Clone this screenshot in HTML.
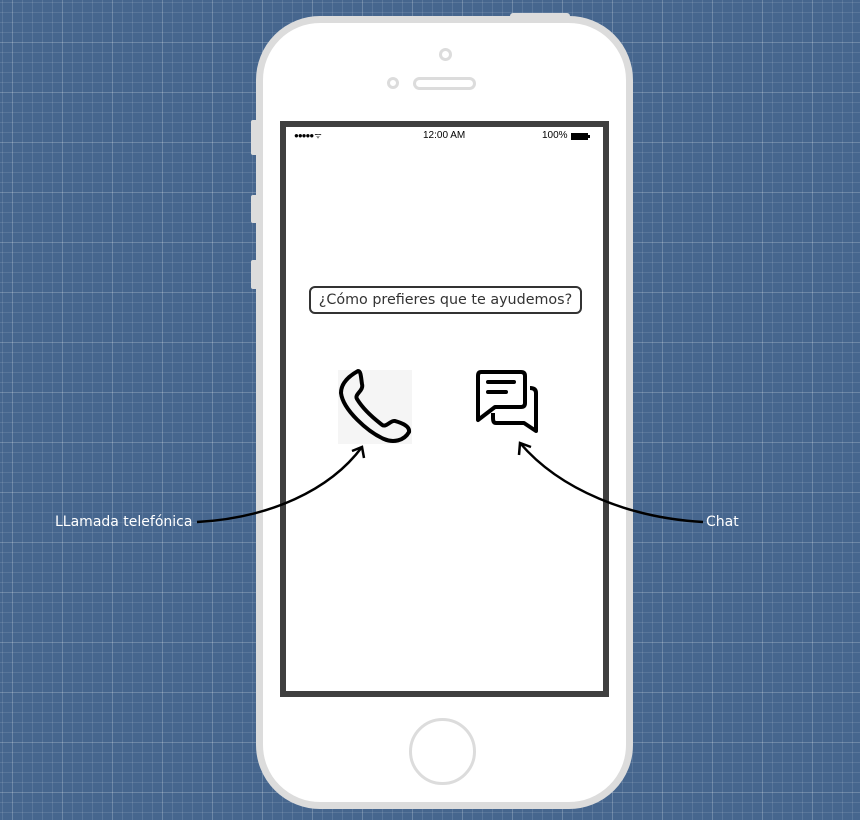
<!DOCTYPE html>
<html><head><style>
body{margin:0;width:860px;height:820px;overflow:hidden;position:relative;font-family:"DejaVu Sans",sans-serif;
background-color:#46668e;
background-image:linear-gradient(rgba(255,255,255,.1) 1px,transparent 1px),linear-gradient(90deg,rgba(255,255,255,.1) 1px,transparent 1px),linear-gradient(rgba(255,255,255,.12) 1px,transparent 1px),linear-gradient(90deg,rgba(255,255,255,.12) 1px,transparent 1px);
background-size:10px 10px,10px 10px,50px 50px,50px 50px;background-position:2px 2px,2px 2px,12px 42px,12px 42px;}
.a{position:absolute;box-sizing:border-box}
</style></head><body>
<div class="a" style="left:510px;top:13px;width:60px;height:8px;background:#dcdcdc;border-radius:3px"></div>
<div class="a" style="left:251px;top:120px;width:8px;height:35px;background:#dcdcdc;border-radius:2px"></div>
<div class="a" style="left:251px;top:195px;width:8px;height:28px;background:#dcdcdc;border-radius:2px"></div>
<div class="a" style="left:251px;top:260px;width:8px;height:29px;background:#dcdcdc;border-radius:2px"></div>
<div class="a" style="left:256px;top:16px;width:377px;height:793px;background:#fff;border:7px solid #dcdcdc;border-radius:64px"></div>
<div class="a" style="left:439px;top:48px;width:13px;height:13px;border:3px solid #dcdcdc;border-radius:50%"></div>
<div class="a" style="left:387px;top:77px;width:12px;height:12px;border:3px solid #dcdcdc;border-radius:50%"></div>
<div class="a" style="left:413px;top:77px;width:63px;height:13px;border:3px solid #dcdcdc;border-radius:7px"></div>
<div class="a" style="left:409px;top:718px;width:67px;height:67px;border:3px solid #dcdcdc;border-radius:50%"></div>
<div class="a" style="left:280px;top:121px;width:329px;height:576px;border:6px solid #3f3f3f;background:#fff"></div>
<div class="a" style="left:294px;top:130px;font-size:8px;color:#000;font-family:'Liberation Sans',sans-serif;letter-spacing:-1px">●●●●● ᯤ</div>
<div class="a" style="left:423px;top:130px;font-size:10px;color:#000;font-family:'Liberation Sans',sans-serif">12:00 AM</div>
<div class="a" style="left:542px;top:130px;font-size:10px;color:#000;font-family:'Liberation Sans',sans-serif">100%</div>
<div class="a" style="left:571px;top:133px;width:17px;height:7px;background:#000"></div>
<div class="a" style="left:588px;top:135px;width:2px;height:3px;background:#000"></div>
<div class="a" style="left:309px;top:286px;width:273px;height:28px;border:2px solid #333;border-radius:6px;font-size:14.3px;color:#333;text-align:center;line-height:24px">¿Cómo prefieres que te ayudemos?</div>
<div class="a" style="left:338px;top:370px;width:74px;height:74px;background:#f5f5f5"></div>
<svg class="a" style="left:0;top:0" width="860" height="820">
<path d="M358 371 C349 376 341 383 341 393 C343 410 368 432 384 439 C393 443 404 441 409 432 C410 426 402 423 395 421 C390 420 386 429 381 424 C372 417 363 409 357 399 C354 394 364 391 362 384 C361 378 361 371 358 371 Z" fill="none" stroke="#000" stroke-width="4" stroke-linejoin="round"/>
<path d="M481 372 H521 Q525 372 525 376 V403 Q525 407 521 407 H495 L478 420 V376 Q478 372 481 372 Z" fill="none" stroke="#000" stroke-width="4" stroke-linejoin="round"/>
<path d="M488 382 H514 M488 392 H506" stroke="#000" stroke-width="4" stroke-linecap="round"/>
<path d="M530 388 Q536 388 536 393 V431 L524 423 H496 Q493 423 493 418 V413" fill="none" stroke="#000" stroke-width="4" stroke-linejoin="round"/>
<path d="M197 522 C270 518 330 490 362 447" fill="none" stroke="#000" stroke-width="2.5"/>
<path d="M352 451 L362 447 L364 458" fill="none" stroke="#000" stroke-width="2.5"/>
<path d="M703 522 C630 518 560 490 520 443" fill="none" stroke="#000" stroke-width="2.5"/>
<path d="M519 455 L520 443 L531 447" fill="none" stroke="#000" stroke-width="2.5"/>
</svg>
<div class="a" style="left:55px;top:514px;font-size:14px;color:#fff">LLamada telefónica</div>
<div class="a" style="left:706px;top:514px;font-size:14px;color:#fff">Chat</div>
</body></html>
